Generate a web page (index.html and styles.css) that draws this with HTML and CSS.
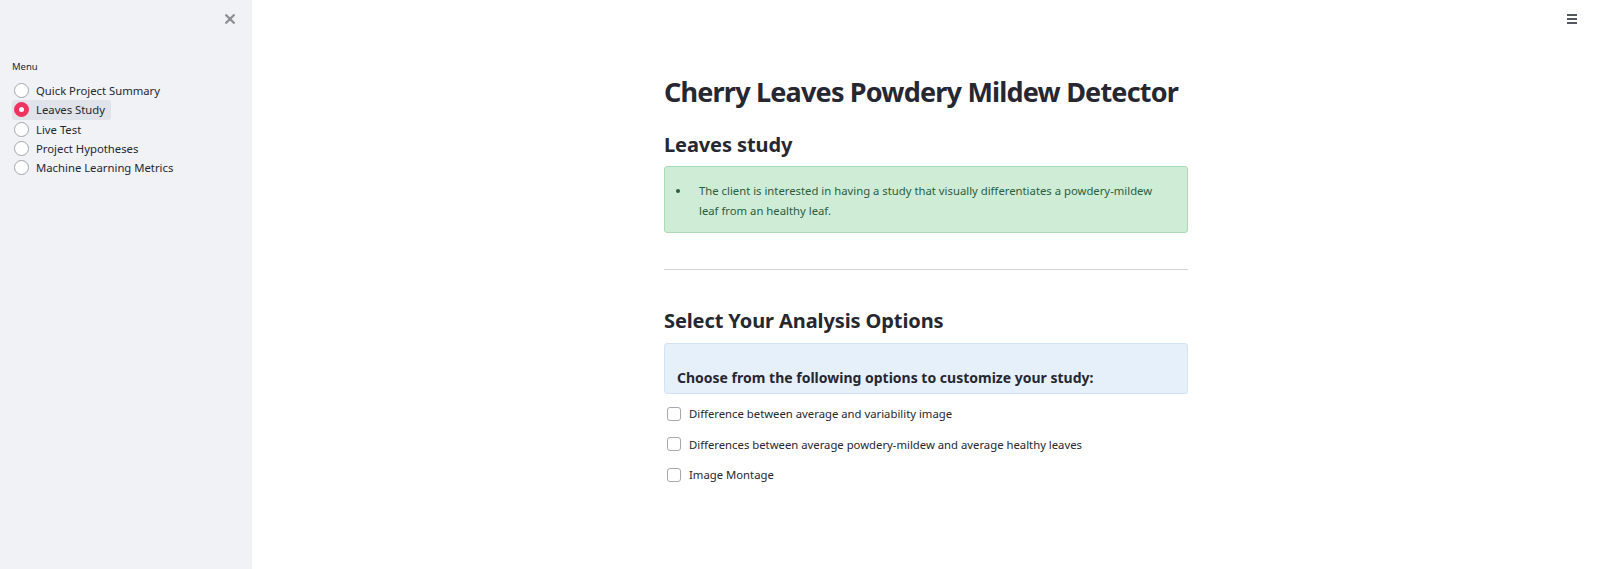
FILE: index.html
```html
<!DOCTYPE html>
<html lang="en">
<head>
<meta charset="utf-8">
<title>Cherry Leaves Powdery Mildew Detector</title>
<link rel="stylesheet" href="styles.css">
</head>
<body>
<div class="app">
  <aside class="sidebar">
    <div class="sidebar-top">
      <button class="close-btn" aria-label="Close sidebar">
        <svg width="10" height="10" viewBox="0 0 10 10"><path d="M1.2 1.2L8.8 8.8M8.8 1.2L1.2 8.8" stroke="#8d8f95" stroke-width="2.3" stroke-linecap="round"/></svg>
      </button>
    </div>
    <div class="menu-label">Menu</div>
    <ul class="radio-list">
      <li class="radio-item"><span class="radio"></span><span class="radio-text">Quick Project Summary</span></li>
      <li class="radio-item selected"><span class="radio"></span><span class="radio-text">Leaves Study</span></li>
      <li class="radio-item"><span class="radio"></span><span class="radio-text">Live Test</span></li>
      <li class="radio-item"><span class="radio"></span><span class="radio-text">Project Hypotheses</span></li>
      <li class="radio-item"><span class="radio"></span><span class="radio-text">Machine Learning Metrics</span></li>
    </ul>
  </aside>
  <main class="main">
    <button class="menu-btn" aria-label="Main menu">
      <span></span><span></span><span></span>
    </button>
    <div class="content">
      <h1 class="title">Cherry Leaves Powdery Mildew Detector</h1>
      <h2 class="subtitle">Leaves study</h2>
      <div class="alert success">
        <ul class="alert-list">
          <li>The client is interested in having a study that visually differentiates a powdery-mildew leaf from an healthy leaf.</li>
        </ul>
      </div>
      <hr class="divider">
      <h2 class="subtitle second">Select Your Analysis Options</h2>
      <div class="alert info">
        <p class="info-text">Choose from the following options to customize your study:</p>
      </div>
      <div class="checks">
        <label class="check"><span class="box"></span><span class="check-text">Difference between average and variability image</span></label>
        <label class="check"><span class="box"></span><span class="check-text">Differences between average powdery-mildew and average healthy leaves</span></label>
        <label class="check"><span class="box"></span><span class="check-text">Image Montage</span></label>
      </div>
    </div>
  </main>
</div>
</body>
</html>
```

FILE: styles.css
```css
* { box-sizing: border-box; }
html, body {
  margin: 0;
  padding: 0;
  height: 100%;
}
body {
  font-family: "Noto Sans", "Open Sans", sans-serif;
  color: #262730;
  background: #ffffff;
  overflow: hidden;
}
.app {
  display: flex;
  height: 569px;
}
.sidebar {
  width: 252px;
  flex: 0 0 252px;
  background: #f0f2f6;
  padding: 0 12px;
}
.sidebar-top {
  display: flex;
  justify-content: flex-end;
  padding-top: 14px;
  padding-right: 5px;
  height: 60px;
}
.close-btn {
  border: 0;
  background: transparent;
  padding: 0;
  width: 10px;
  height: 10px;
  display: flex;
  align-items: center;
  justify-content: center;
}
.menu-label {
  font-size: 9.5px;
  line-height: 14px;
  color: #262730;
  margin-bottom: 7px;
}
.radio-list {
  list-style: none;
  margin: 0;
  padding: 0;
  display: flex;
  flex-direction: column;
}
.radio-item {
  display: flex;
  align-items: center;
  gap: 7px;
  height: 19.3px;
  padding: 0 6px 0 2px;
  font-size: 11.3px;
  align-self: flex-start;
  border-radius: 3px;
}
.radio-item.selected {
  background: #e0e3ea;
}
.radio {
  width: 15px;
  height: 15px;
  border-radius: 50%;
  border: 1px solid #a3a5ab;
  background: #ffffff;
  flex: 0 0 15px;
  position: relative;
}
.radio-item.selected .radio {
  background: #f0325f;
  border-color: #f0325f;
}
.radio-item.selected .radio::after {
  content: "";
  position: absolute;
  left: 50%;
  top: 50%;
  width: 5px;
  height: 5px;
  margin: -2.5px 0 0 -2.5px;
  border-radius: 50%;
  background: #ffffff;
}
.main {
  flex: 1;
  position: relative;
}
.menu-btn {
  position: absolute;
  top: 14px;
  right: 23px;
  border: 0;
  background: transparent;
  padding: 0;
  width: 10px;
  display: flex;
  flex-direction: column;
  gap: 2.4px;
}
.menu-btn span {
  display: block;
  height: 1.7px;
  width: 10px;
  background: #55575f;
}
.content {
  width: 524px;
  margin-left: 412px;
  padding-top: 75px;
}
.title {
  margin: 0;
  font-size: 27px;
  font-weight: 700;
  line-height: 34px;
  letter-spacing: -0.8px;
  white-space: nowrap;
}
.subtitle {
  margin: 22px 0 0;
  font-size: 20px;
  font-weight: 700;
  line-height: 28px;
  letter-spacing: -0.1px;
}
.subtitle.second {
  margin-top: 37px;
}
.alert {
  border-radius: 3px;
  border: 1px solid;
}
.success {
  margin-top: 7px;
  background: #cfecd7;
  border-color: #a9dbb7;
  color: #2a5e3c;
  height: 67px;
  padding: 14px 14px 0 11px;
}
.alert-list {
  margin: 0;
  padding: 0;
  list-style: none;
  font-size: 11.3px;
  line-height: 20px;
}
.alert-list li {
  display: flex;
  align-items: flex-start;
}
.alert-list li::before {
  content: "";
  flex: 0 0 4px;
  width: 4px;
  height: 4px;
  border-radius: 50%;
  background: #2a5e3c;
  margin: 8px 19px 0 0;
}
.divider {
  margin: 36px 0 0;
  border: 0;
  border-top: 1px solid #d4d4d8;
  height: 0;
}
.info {
  margin-top: 8px;
  background: #e6f0fb;
  border-color: #d3e3f5;
  height: 51px;
  padding: 24px 12px 0;
}
.info-text {
  margin: 0;
  font-size: 14px;
  font-weight: 700;
  line-height: 20px;
}
.checks {
  display: flex;
  flex-direction: column;
  padding-top: 12.5px;
  gap: 16.5px;
}
.check {
  display: flex;
  align-items: center;
  gap: 8px;
  height: 14px;
  padding-left: 3px;
  font-size: 11.3px;
}
.box {
  width: 14px;
  height: 14px;
  border: 1px solid #a7a8ad;
  border-radius: 3px;
  background: #fff;
  flex: 0 0 14px;
}
```
